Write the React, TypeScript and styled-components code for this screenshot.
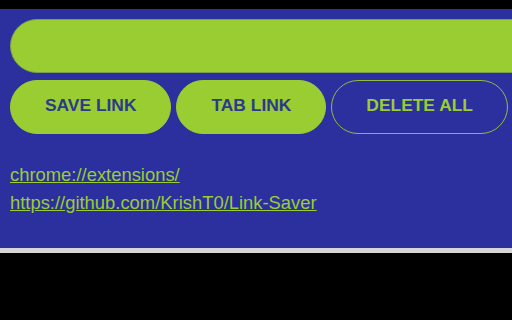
import styled, { createGlobalStyle } from "styled-components";

const GlobalStyle = createGlobalStyle`
  html, body {
    margin: 0;
    padding: 0;
    background: #000;
    font-family: "Liberation Sans", Arial, sans-serif;
  }
`;

const Popup = styled.div`
  margin-top: 9px;
  height: 229px;
  padding: 10px 0 0 10px;
  background: #2c2f9e;
  border-bottom: 5px solid #d6d6d6;
  overflow: hidden;
`;

const Input = styled.input`
  display: block;
  box-sizing: border-box;
  width: 540px;
  height: 54px;
  margin: 0;
  padding: 0 20px;
  background: #9acd32;
  border: 1px solid #7f9a55;
  border-radius: 27px;
  outline: none;
`;

const Actions = styled.div`
  display: flex;
  gap: 5px;
  margin-top: 7px;
`;

const Button = styled.button<{ $outline?: boolean }>`
  box-sizing: border-box;
  height: 54px;
  padding: 0 34px 4px;
  border-radius: 27px;
  border: 1px solid ${(p) => (p.$outline ? "#8fbf3a" : "#9acd32")};
  background: ${(p) => (p.$outline ? "transparent" : "#9acd32")};
  color: ${(p) => (p.$outline ? "#9acd32" : "#2b3a8c")};
  font-family: "Liberation Sans", Arial, sans-serif;
  font-size: 17.4px;
  font-weight: bold;
  text-transform: uppercase;
`;

const LinkList = styled.ul`
  list-style: none;
  margin: 27px 0 0;
  padding: 0;
`;

const LinkItem = styled.li`
  line-height: 28px;
  font-size: 18.4px;
`;

const Link = styled.a`
  color: #9acd32;
  text-decoration: underline;
`;

const links = ["chrome://extensions/", "https://github.com/KrishT0/Link-Saver"];

export default function App() {
  return (
    <>
      <GlobalStyle />
      <Popup>
        <Input type="text" />
        <Actions>
          <Button>Save Link</Button>
          <Button>Tab Link</Button>
          <Button $outline>Delete All</Button>
        </Actions>
        <LinkList>
          {links.map((url) => (
            <LinkItem key={url}>
              <Link href={url} target="_blank">
                {url}
              </Link>
            </LinkItem>
          ))}
        </LinkList>
      </Popup>
    </>
  );
}
